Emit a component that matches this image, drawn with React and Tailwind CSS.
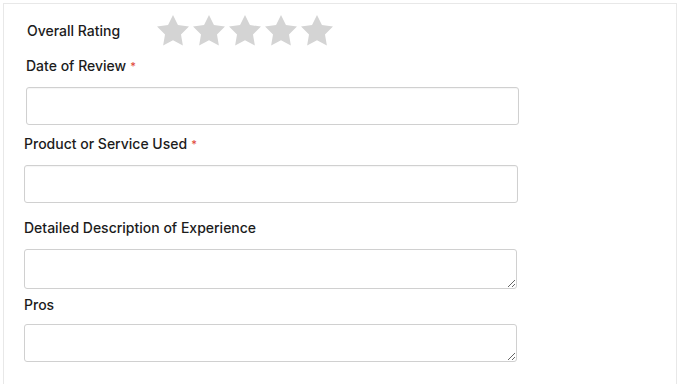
import React from "react";

function Star() {
  return (
    <svg width="32" height="31" viewBox="2 2 20 19.4" className="block">
      <path
        d="M12 2l3.09 6.26L22 9.27l-5 4.87 1.18 6.88L12 17.77l-6.18 3.25L7 14.14 2 9.27l6.91-1.01L12 2z"
        fill="#d4d4d4"
        strokeLinejoin="round"
      />
    </svg>
  );
}

function Label({ children, required, className }) {
  return (
    <p className={"text-[14px] leading-5 font-medium text-[#1c1c1c] " + className}>
      {children}
      {required && <span className="text-[#e0463b] text-[11px] align-top ml-1">*</span>}
    </p>
  );
}

export default function App() {
  return (
    <div className="w-[680px] h-[384px] bg-white overflow-hidden" style={{ fontFamily: "Inter, 'Noto Sans', sans-serif" }}>
      <div className="ml-[3px] mt-[3px] w-[674px] h-[381px] border-l border-t border-r border-[#e8e8e8] bg-white">
        {/* Rating row */}
        <div className="flex items-center mt-[10px] h-[32px] pl-[23px]">
          <p className="w-[130px] text-[14px] font-medium text-[#1c1c1c]">Overall Rating</p>
          <div className="flex gap-[4px]">
            {[1, 2, 3, 4, 5].map((s) => (
              <Star key={s} />
            ))}
          </div>
        </div>

        <Label required className="mt-[10px] ml-[22px]">Date of Review</Label>
        <input className="block mt-[11px] ml-[22px] w-[493px] h-[38px] border border-[#d0d0d0] rounded-[3px] shadow-[inset_0_1px_1px_rgba(0,0,0,0.04)] outline-none" />

        <Label required className="mt-[9px] ml-[20px]">Product or Service Used</Label>
        <input className="block mt-[11px] ml-[20px] w-[494px] h-[38px] border border-[#d0d0d0] rounded-[3px] shadow-[inset_0_1px_1px_rgba(0,0,0,0.04)] outline-none" />

        <Label className="mt-[15px] ml-[20px]">Detailed Description of Experience</Label>
        <textarea className="block mt-[11px] ml-[20px] w-[493px] h-[40px] border border-[#d0d0d0] rounded-[3px] outline-none" />

        <Label className="mt-[6px] ml-[20px]">Pros</Label>
        <textarea className="block mt-[9px] ml-[20px] w-[493px] h-[38px] border border-[#d0d0d0] rounded-[3px] outline-none" />
      </div>
    </div>
  );
}
